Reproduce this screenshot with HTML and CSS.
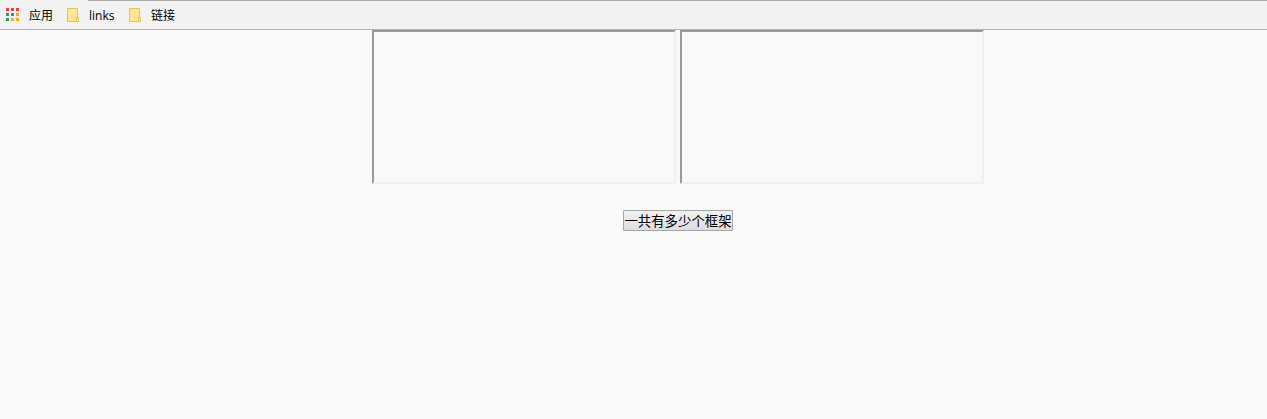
FILE: index.html
```html
<!DOCTYPE html>
<html lang="zh-CN">
<head>
<meta charset="utf-8">
<title>frames</title>
<link rel="stylesheet" href="styles.css">
</head>
<body>
<nav class="bookmarks">
  <a class="bookmark apps">
    <svg class="icon" width="13" height="13" viewBox="0 0 13 13" shape-rendering="crispEdges">
      <path fill="#f23c34" d="M0 0h3v3H0zM5 0h3v3H5zM10 0h3v3h-3z"/>
      <path fill="#2f9e58" d="M0 5h3v3H0zM0 10h3v3H0z"/>
      <path fill="#2b84f0" d="M5 5h3v3H5z"/>
      <path fill="#f5a90c" d="M10 5h3v3h-3zM5 10h3v3H5zM10 10h3v3h-3z"/>
    </svg>
    <span class="label">应用</span>
  </a>
  <a class="bookmark folder">
    <svg class="icon" width="12" height="14" viewBox="0 0 12 14">
      <path d="M.5 .5h10v9h1v4H.5z" fill="#ffe694" stroke="#e9c452"/>
      <path d="M9.5 13V9.5h1" fill="none" stroke="#e9c452"/>
    </svg>
    <span class="label">links</span>
  </a>
  <a class="bookmark folder">
    <svg class="icon" width="12" height="14" viewBox="0 0 12 14">
      <path d="M.5 .5h10v9h1v4H.5z" fill="#ffe694" stroke="#e9c452"/>
      <path d="M9.5 13V9.5h1" fill="none" stroke="#e9c452"/>
    </svg>
    <span class="label">链接</span>
  </a>
</nav>
<main class="page">
  <div class="frames">
    <div class="frame"></div>
    <div class="frame"></div>
  </div>
  <button class="count" type="button">一共有多少个框架</button>
</main>
</body>
</html>
```
FILE: styles.css
```css
body {
  margin: 0;
  background: #f9f9f9;
  color: #000;
  font-family: "Open Sans", "Noto Sans CJK SC", sans-serif;
  overflow: hidden;
}
.bookmarks {
  display: flex;
  align-items: center;
  box-sizing: border-box;
  height: 30px;
  padding: 1px 0 0 6px;
  border-bottom: 1px solid #b3b3b3;
  background:
    linear-gradient(#aaa, #aaa) 88px 0 / 1179px 1px no-repeat,
    #f2f2f2;
  font-size: 12px;
  line-height: 16px;
}
.bookmark {
  display: flex;
  align-items: center;
  white-space: nowrap;
}
.icon {
  display: block;
  flex: none;
}
.label {
  padding-top: 2px;
}
.apps {
  gap: 10px;
  width: 61px;
}
.apps .icon {
  margin-bottom: 2px;
}
.folder {
  gap: 10px;
  width: 62px;
}
.page {
  display: flex;
  flex-direction: column;
  align-items: center;
  padding-left: 89px;
}
.frames {
  display: flex;
  gap: 4px;
}
.frame {
  width: 300px;
  height: 150px;
  border: 2px solid;
  border-color: #9a9a9a #f0f0f0 #f0f0f0 #9a9a9a;
}
.count {
  display: flex;
  align-items: center;
  justify-content: center;
  box-sizing: border-box;
  width: 110px;
  height: 21px;
  margin-top: 26px;
  padding: 0;
  border: 1px solid #a6a6a6;
  border-radius: 1px;
  background: linear-gradient(#f2f2f2, #ddd);
  color: #000;
  font: 13.4px/19px "Noto Sans CJK SC", sans-serif;
  white-space: nowrap;
}
```
